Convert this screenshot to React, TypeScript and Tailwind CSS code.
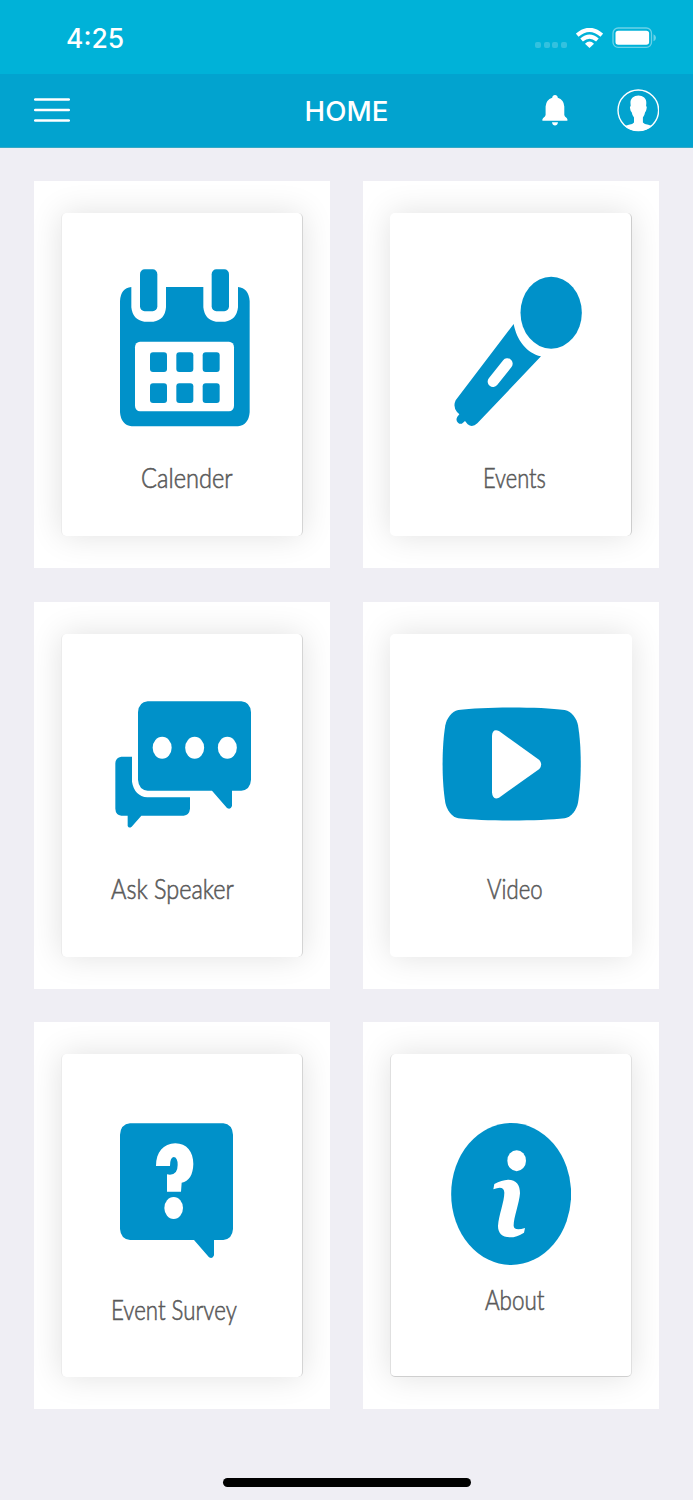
import type { ReactNode } from 'react'

function CalendarIcon() {
  return (
    <svg viewBox="270 297 390 474" className="w-[130px] h-[158px] fill-[#0091c9]">
      <path d="M270 393 Q272 354 304 351 V412 Q308 450 343 455 H370 Q405 450 408 412 V351 H520 V412 Q524 450 558 455 H585 Q620 450 624 412 V351 Q656 354 659 393 V727 Q656 765 624 769 H305 Q273 765 270 727 Z" />
      <rect x="330" y="298" width="52" height="126" rx="14" ry="15" />
      <rect x="545" y="298" width="52" height="126" rx="14" ry="15" />
      <rect x="315" y="515" width="297" height="209" rx="15" ry="17" fill="#fff" />
      {[360, 439, 518].map((x) => (
        <g key={x}>
          <rect x={x} y="547" width="51" height="59" rx="9" />
          <rect x={x} y="640" width="51" height="59" rx="9" />
        </g>
      ))}
    </svg>
  )
}

function MicIcon() {
  return (
    <svg viewBox="282 318 384 453" className="w-[128px] h-[151px] fill-[#0091c9]">
      <ellipse cx="573.5" cy="428" rx="92" ry="108" />
      <path d="M461 462 C470 510 500 550 543 559 L352 760 Q337 774 323 763 L315 753 L309 758 Q302 765 294 758 Q286 750 292 740 L298 733 L291 726 Q278 710 287 691 Z" />
      <path d="M442 581 L399 635" stroke="#fff" strokeWidth="32" strokeLinecap="round" />
    </svg>
  )
}

function ChatIcon() {
  return (
    <svg viewBox="255 333 408 381" className="w-[136px] h-[127px] fill-[#0091c9]">
      <path d="M324 367 Q326 336 353 334 H634 Q661 336 663 367 V569 Q661 599 634 602 H606 V648 Q602 660 591 654 L546 602 H353 Q326 599 324 569 Z" />
      <path d="M256 520 Q257 502 274 500 H306 V575 Q313 618 352 622 H480 V656 Q478 675 461 677 H334 L305 710 Q297 716 293 708 V677 H274 Q257 675 256 656 Z" />
      <g fill="#fff">
        <ellipse cx="396.5" cy="473" rx="28.5" ry="33" />
        <ellipse cx="494" cy="473" rx="28.5" ry="33" />
        <ellipse cx="592" cy="473" rx="28.5" ry="33" />
      </g>
    </svg>
  )
}

function VideoIcon() {
  return (
    <svg viewBox="246 351 417 342" className="w-[139px] h-[114px] fill-[#0091c9]">
      <path d="M295 360 C370 350 540 350 614 360 C636 364 650 386 654 406 C665 470 665 574 654 638 C650 658 636 680 614 685 C540 694 370 694 295 685 C274 680 260 658 256 638 C245 574 245 470 256 406 C260 386 274 364 295 360 Z" />
      <path d="M396 438 Q397 415 417 423 L538 510 Q549 523 538 537 L417 623 Q398 632 396 607 Z" fill="#fff" />
    </svg>
  )
}

function SurveyIcon() {
  return (
    <svg viewBox="270 339 339 405" className="w-[113px] h-[135px] fill-[#0091c9]">
      <path d="M270 374 Q272 343 300 340 H580 Q607 343 609 374 V657 Q607 687 580 690 H552 V736 Q548 748 537 742 L492 690 H300 Q272 687 270 657 Z" />
      <g fill="#fff">
        <path d="M378 468 C378 426 400 401 436 400 C470 400 490 425 490 462 C489 495 477 514 455 518 L453 545 H411 V493 Q443 499 443 465 Q443 442 431 441 Q420 442 420 468 Z" />
        <ellipse cx="431" cy="594" rx="28" ry="33" />
      </g>
    </svg>
  )
}

function AboutIcon() {
  return (
    <svg viewBox="273 339 360 426" className="w-[120px] h-[142px] fill-[#0091c9]">
      <ellipse cx="453.5" cy="552" rx="180" ry="213" />
      <g fill="#fff">
        <ellipse cx="470" cy="452" rx="28" ry="31.5" />
        <path d="M400 538 L403 522 Q425 510 444 509 C470 509 480 525 480 550 C478 580 460 625 461 648 Q463 664 495 654 L492 668 Q470 682 450 682 C425 682 414 668 414 648 C416 615 433 575 433 548 Q432 525 400 538 Z" />
      </g>
    </svg>
  )
}

type TileProps = {
  label: string
  icon: ReactNode
  iconClass: string
  labelClass: string
  cardClass?: string
}

function Tile({ label, icon, iconClass, labelClass, cardClass = '' }: TileProps) {
  return (
    <div className="h-[387px] bg-white overflow-hidden pt-8 pl-[27px]">
      <div
        className={`w-[242px] h-[323px] flex flex-col items-start rounded-[5px] bg-white shadow-[0_0_32px_rgba(0,0,0,0.12)] ${cardClass}`}
      >
        <div className={`shrink-0 [&>svg]:block ${iconClass}`}>{icon}</div>
        <span
          className={`block whitespace-nowrap origin-left font-['Lato'] font-light text-[27px] leading-8 text-[#5a5a5a] [-webkit-text-stroke:0.6px_#5a5a5a] ${labelClass}`}
        >
          {label}
        </span>
      </div>
    </div>
  )
}

function StatusBar() {
  return (
    <div className="h-[74px] bg-[#00b2d8] flex items-start justify-between pl-[66px] pr-9 pt-[22px]">
      <span className="font-['Inter'] font-medium text-[26.5px] leading-8 text-white">4:25</span>
      <div className="flex items-start pt-[5px]">
        <div className="flex gap-[2.4px] mt-[15px] mr-[9px]">
          {[0, 1, 2, 3].map((i) => (
            <div key={i} className="size-[6px] rounded-[2px] bg-white/20" />
          ))}
        </div>
        <svg viewBox="0 0 27 20" className="w-[27px] h-5 mr-[9.5px] mt-[.5px]" fill="none" stroke="#fff" strokeWidth="4">
          <path d="M1.2 7.2 Q13.5 -3.5 25.8 7.2" />
          <path d="M5.6 12 Q13.5 5.2 21.4 12" />
          <path d="M9 15.7 Q13.5 11.5 18 15.7 L13.5 20 Z" fill="#fff" stroke="none" />
        </svg>
        <svg viewBox="0 0 45 22" className="w-[45px] h-[22px]">
          <rect x="1" y="1" width="38.5" height="19.4" rx="5.2" fill="none" stroke="#fff" strokeOpacity=".42" strokeWidth="1.3" />
          <rect x="3.5" y="3.8" width="33.6" height="14" rx="2.8" fill="#fff" />
          <path d="M41.5 7.2 Q44 8.2 44 10.7 Q44 13.2 41.5 14.2 Z" fill="#fff" fillOpacity=".42" />
        </svg>
      </div>
    </div>
  )
}

function Header() {
  return (
    <header className="h-[74px] bg-[#02a3cf] border-b border-[#35a9c6] grid grid-cols-[1fr_auto_1fr] items-center px-[34px]">
      <button className="text-white" aria-label="Menu">
        <svg viewBox="0 0 36 25" className="block w-9 h-[25px]" stroke="currentColor" strokeWidth="2.5" strokeLinecap="round">
          <path d="M1.2 1.6 H34.8 M1.2 12.1 H34.8 M1.2 22.6 H34.8" />
        </svg>
      </button>
      <h1 className="font-['Inter'] font-medium text-[27.7px] leading-8 text-white">HOME</h1>
      <div className="flex items-center justify-end">
        <svg viewBox="0 0 26 31" className="w-[26px] h-[31px] mr-[49px]" fill="#fff">
          <path d="M10.2 2.8 Q10.6 0 13 0 Q15.4 0 15.8 2.8 Q22 5 22.3 11.5 V20 Q22.5 21.7 24.7 23 L25.4 24.2 V25.7 H.4 V24.2 L1.2 23 Q3.4 21.7 3.6 20 V11.5 Q4 5 10.2 2.8 Z" />
          <path d="M10 27.2 H16 Q15.4 30.5 13 30.5 Q10.6 30.5 10 27.2 Z" />
        </svg>
        <svg viewBox="-.3 0 42 43" className="w-[42px] h-[43px]">
          <circle cx="21" cy="21.3" r="20.3" fill="none" stroke="#fff" strokeWidth="1.4" />
          <path
            d="M13.2 14.5 C12 3.8 30.3 3.8 29 14.5 L28.8 17 Q30 17.4 29.2 20 Q28.9 22.5 27.8 23.2 Q27.2 26.6 25.6 28.6 V33.6 Q27 35.6 31 35.8 L34.5 37 Q29 42.1 21 42.1 Q13 42.1 7.5 37 L11.5 35.8 Q15.5 35.6 16.7 33.6 V28.6 Q15 26.6 14.4 23.2 Q13.2 22.5 12.9 20 Q12.1 17.4 13.4 17 Z"
            fill="#fff"
          />
        </svg>
      </div>
    </header>
  )
}

export default function App() {
  return (
    <div className="w-[693px] h-[1500px] bg-[#efeef4] flex flex-col overflow-hidden">
      <StatusBar />
      <Header />
      <main className="grid grid-cols-2 gap-x-[33px] gap-y-[33.5px] px-[34px] pt-[33px]">
        <Tile
          label="Calender"
          icon={<CalendarIcon />}
          iconClass="mt-14 ml-[58px]"
          labelClass="mt-[35px] ml-[79px] scale-x-[.875]"
          cardClass="border-x border-l-[#ececec] border-r-[#d4d4d4]"
        />
        <Tile
          label="Events"
          icon={<MicIcon />}
          iconClass="mt-[63px] ml-[64px]"
          labelClass="mt-[35px] ml-[93px] scale-x-[.81]"
          cardClass="border-r border-r-[#cdcdcd]"
        />
        <Tile
          label="Ask Speaker"
          icon={<ChatIcon />}
          iconClass="mt-[67px] ml-[53px]"
          labelClass="mt-[45px] ml-[49px] scale-x-[.87]"
          cardClass="border-x border-l-[#ececec] border-r-[#d4d4d4]"
        />
        <Tile
          label="Video"
          icon={<VideoIcon />}
          iconClass="mt-[73px] ml-[52px]"
          labelClass="mt-[52px] ml-[97px] scale-x-[.82]"
        />
        <Tile
          label="Event Survey"
          icon={<SurveyIcon />}
          iconClass="mt-[69px] ml-[58px]"
          labelClass="mt-[36px] ml-[49px] scale-x-[.825]"
          cardClass="border-x border-l-[#ececec] border-r-[#d4d4d4]"
        />
        <Tile
          label="About"
          icon={<AboutIcon />}
          iconClass="mt-[69px] ml-[60px]"
          labelClass="mt-[19px] ml-[94px] scale-x-[.83]"
          cardClass="border-x border-b border-x-[#e0e0e0] border-b-[#cfcfcf]"
        />
      </main>
      <div className="mt-auto mb-[13px] mx-auto w-[248px] h-[9px] rounded-full bg-black" />
    </div>
  )
}
